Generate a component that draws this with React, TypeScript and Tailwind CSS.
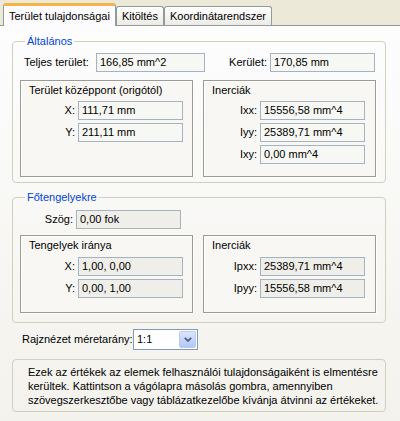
import React from "react";

type FieldProps = {
  label: string;
  value: string;
  labelW: string;
  tone?: "light" | "dim";
};

function Field({ label, value, labelW, tone = "light" }: FieldProps) {
  return (
    <div className="flex items-center">
      <span className={`${labelW} shrink-0 text-right pr-[3px]`}>{label}</span>
      <ValueBox value={value} width="w-[105px]" tone={tone} />
    </div>
  );
}

function ValueBox({ value, width, tone = "light" }: { value: string; width: string; tone?: "light" | "dim" }) {
  return (
    <div
      className={`${width} h-[19px] shrink-0 flex items-center pl-[3px] border border-[#a3b3c2] ${
        tone === "light" ? "bg-[#f7f7f4]" : "bg-[#efeee9]"
      }`}
    >
      {value}
    </div>
  );
}

function InnerBox({ title, h, children }: { title: string; h: string; children: React.ReactNode }) {
  return (
    <div
      className={`w-[173px] ${h} border border-[#9c9b95] shadow-[inset_1px_1px_0_#ffffff,1px_1px_0_#ffffff] bg-[#f8f7f3] pl-[8px] pt-[3px]`}
    >
      <div className="leading-[13px]">{title}</div>
      {children}
    </div>
  );
}

function Group({ title, className, children }: { title: string; className?: string; children: React.ReactNode }) {
  return (
    <fieldset
      className={`w-[374px] border border-[#d0d0bf] rounded-[4px] pl-[7px] pr-[9px] ${className ?? ""}`}
    >
      <legend className="ml-[5px] px-[2px] text-[#0046d5] leading-[13px]">{title}</legend>
      {children}
    </fieldset>
  );
}

function Tab({ label, active }: { label: string; active?: boolean }) {
  if (active) {
    return (
      <div className="relative z-10 -mb-px h-[23px] px-[5px] flex items-center bg-[#fcfcfe] border-x border-[#919b9c] rounded-t-[3px] border-t-[3px] border-t-[#f5b443]">
        {label}
      </div>
    );
  }
  return (
    <div className="h-[19px] px-[5px] flex items-center border border-b-0 border-[#919b9c] rounded-t-[3px] bg-gradient-to-b from-[#ffffff] to-[#ecebe5]">
      {label}
    </div>
  );
}

export default function App() {
  return (
    <div className="w-[400px] h-[421px] overflow-hidden bg-[#ece9d8] text-[11px] text-black font-['Liberation_Sans',Arial,sans-serif] flex flex-col">
      {/* fülsor */}
      <div className="h-[25px] shrink-0 flex items-end pl-[3px]">
        <Tab label="Terület tulajdonságai" active />
        <Tab label="Kitöltés" />
        <Tab label="Koordinátarendszer" />
      </div>

      {/* fül tartalma */}
      <div className="flex-1 border-t border-[#919b9c] bg-gradient-to-b from-[#fdfdfe] to-[#f3f2ec] pt-[9px] pl-[12px]">
        <Group title="Általános" className="pb-[5px]">
          <div className="mt-[5px] flex items-center">
            <span className="w-[76px] pl-[4px] shrink-0">Teljes terület:</span>
            <ValueBox value="166,85 mm^2" width="w-[109px]" />
            <span className="ml-auto pr-[3px]">Kerület:</span>
            <ValueBox value="170,85 mm" width="w-[105px]" />
            <span className="w-[1px]" />
          </div>
          <div className="mt-[8px] flex gap-[10px]">
            <InnerBox title="Terület középpont (origótól)" h="h-[97px]">
              <div className="mt-[4px] flex flex-col gap-[3px] -ml-[8px]">
                <Field label="X:" value="111,71 mm" labelW="w-[57px]" />
                <Field label="Y:" value="211,11 mm" labelW="w-[57px]" />
              </div>
            </InnerBox>
            <InnerBox title="Inerciák" h="h-[97px]">
              <div className="mt-[4px] flex flex-col gap-[3px] -ml-[8px]">
                <Field label="Ixx:" value="15556,58 mm^4" labelW="w-[56px]" />
                <Field label="Iyy:" value="25389,71 mm^4" labelW="w-[56px]" />
                <Field label="Ixy:" value="0,00 mm^4" labelW="w-[56px]" />
              </div>
            </InnerBox>
          </div>
        </Group>

        <Group title="Főtengelyekre" className="mt-[8px] pb-[9px]">
          <div className="mt-[6px] -ml-[1px]">
            <Field label="Szög:" value="0,00 fok" labelW="w-[57px]" tone="dim" />
          </div>
          <div className="mt-[6px] flex gap-[10px]">
            <InnerBox title="Tengelyek iránya" h="h-[78px]">
              <div className="mt-[5px] flex flex-col gap-[3px] -ml-[8px]">
                <Field label="X:" value="1,00, 0,00" labelW="w-[57px]" tone="dim" />
                <Field label="Y:" value="0,00, 1,00" labelW="w-[57px]" tone="dim" />
              </div>
            </InnerBox>
            <InnerBox title="Inerciák" h="h-[78px]">
              <div className="mt-[5px] flex flex-col gap-[3px] -ml-[8px]">
                <Field label="Ipxx:" value="25389,71 mm^4" labelW="w-[56px]" tone="dim" />
                <Field label="Ipyy:" value="15556,58 mm^4" labelW="w-[56px]" tone="dim" />
              </div>
            </InnerBox>
          </div>
        </Group>

        <div className="mt-[6px] ml-[10px] flex items-center">
          <span className="w-[111px] shrink-0">Rajznézet méretarány:</span>
          <div className="w-[65px] h-[21px] border border-[#7f9db9] bg-white flex items-center">
            <span className="flex-1 pl-[3px]">1:1</span>
            <div className="w-[17px] h-[17px] mr-[1px] rounded-[2px] border border-[#b9cbf3] bg-gradient-to-b from-[#dbe6fd] to-[#b3c7f5] flex items-center justify-center">
              <svg width="8" height="5" viewBox="0 0 8 5">
                <path d="M0.8 0.8 L4 4 L7.2 0.8" fill="none" stroke="#4d6185" strokeWidth="1.8" />
              </svg>
            </div>
          </div>
        </div>

        <div className="mt-[9px] w-[374px] h-[53px] border border-[#d0d0bf] rounded-[4px] pl-[15px] pt-[5px] leading-[14px]">
          Ezek az értékek az elemek felhasználói tulajdonságaiként is elmentésre
          <br />
          kerültek. Kattintson a vágólapra másolás gombra, amennyiben
          <br />
          szövegszerkesztőbe vagy táblázatkezelőbe kívánja átvinni az értékeket.
        </div>
      </div>
    </div>
  );
}
